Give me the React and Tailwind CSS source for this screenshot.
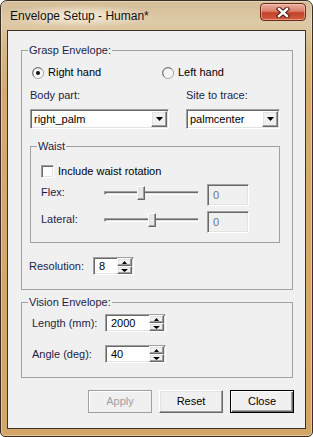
import React from "react";

const sunken =
  "border border-t-[#a0a0a0] border-l-[#a0a0a0] border-r-white border-b-white shadow-[inset_1px_1px_0_#696969,inset_-1px_-1px_0_#e3e3e3]";
const raised =
  "border border-t-white border-l-white border-r-[#696969] border-b-[#696969] shadow-[inset_-1px_-1px_0_#a0a0a0,inset_1px_1px_0_#e3e3e3]";

const Radio = ({ checked }) => (
  <svg width="12" height="12" viewBox="0 0 12 12" className="shrink-0">
    <circle cx="6" cy="6" r="5.5" fill="#fff" stroke="#a0a0a0" />
    <path d="M2.3 9.7 A5 5 0 0 1 9.7 2.3" fill="none" stroke="#6e6e6e" />
    <circle cx="6" cy="6" r="4.2" fill="#f4f4f4" />
    {checked && <circle cx="6" cy="6" r="2" fill="#111" />}
  </svg>
);

const Spin = ({ value, w }) => (
  <div className={`${sunken} ${w} h-[18px] bg-white flex items-center`}>
    <span className="flex-1 pl-[5px] text-[11px] leading-[13px] text-black">{value}</span>
    <div className="flex flex-col w-[15px] h-[16px] mr-[1px]">
      <div className={`${raised} h-[8px] bg-[#f0f0f0] flex items-center justify-center`}>
        <svg width="5" height="3" viewBox="0 0 5 3">
          <polygon points="2.5,0 5,3 0,3" fill="#000" />
        </svg>
      </div>
      <div className={`${raised} h-[8px] bg-[#f0f0f0] flex items-center justify-center`}>
        <svg width="7" height="3" viewBox="0 0 7 3">
          <polygon points="0,0 7,0 3.5,3" fill="#000" />
        </svg>
      </div>
    </div>
  </div>
);

const Select = ({ value, w }) => (
  <div className={`${sunken} ${w} h-[20px] bg-white flex items-center`}>
    <span className="flex-1 pl-[3px] text-[11px] leading-[13px] text-black">{value}</span>
    <div className={`${raised} w-[16px] h-[16px] mr-[1px] bg-[#f0f0f0] flex items-center justify-center`}>
      <svg width="7" height="4" viewBox="0 0 7 4">
        <polygon points="0,0 7,0 3.5,4" fill="#000" />
      </svg>
    </div>
  </div>
);

const Slider = ({ pos }) => (
  <div className="relative w-[95px] h-[18px] flex items-center">
    <div className={`${sunken} w-full h-[4px] bg-[#e3e3e3]`} />
    <div
      className={`${raised} absolute top-[2px] w-[8px] h-[14px] bg-[#e8e8e8]`}
      style={{ left: pos }}
    />
  </div>
);

const SliderRow = ({ label, pos, mt }) => (
  <div className={`flex items-start h-[22px] pl-[10px] ${mt}`}>
    <div className="flex items-center h-[17px] w-[63px] text-[#1e1e46]">{label}</div>
    <div className="h-[17px] flex items-center">
      <Slider pos={pos} />
    </div>
    <div className={`${sunken} ml-[8px] w-[42px] h-[22px] bg-[#f0f0f0] flex items-center pl-[5px] text-[#6a7490]`}>
      0
    </div>
  </div>
);

const App = () => {
  return (
    <div className="w-[313px] h-[437px] bg-white [font-family:'Liberation_Sans',Arial,sans-serif]">
      <div className="w-[313px] h-[437px] flex flex-col rounded-t-[7px] rounded-b-[5px] border border-[#3a2f22] bg-[linear-gradient(180deg,#d4bd98_0px,#dfcaa8_22px,#d9b888_45px,#d5aa70_90px,#d4a568_100%)] shadow-[inset_0_0_0_1px_rgba(255,255,255,0.35)]">
        {/* Title bar */}
        <div className="h-[29px] flex items-start justify-between pl-[9px] pr-[6px]">
          <div className="h-[29px] flex items-center">
            <span className="px-[6px] -ml-[6px] py-[4px] text-[12px] leading-[14px] text-[#111] bg-[radial-gradient(closest-side,rgba(255,250,240,0.8),rgba(255,250,240,0))]">
              Envelope Setup - Human*
            </span>
          </div>
          <div className="mt-[2px] w-[46px] h-[18px] rounded-[4px] border border-[#6b2b1e] bg-[linear-gradient(180deg,#eab0a0_0%,#d9806a_45%,#c3432a_55%,#d25c3c_100%)] shadow-[inset_0_0_0_1px_rgba(255,220,200,0.45)] flex items-center justify-center">
            <svg width="14" height="11" viewBox="0 0 14 11">
              <path d="M3 2 L11 9 M11 2 L3 9" stroke="#4a1c14" strokeWidth="4.4" strokeLinecap="square" />
              <path d="M3 2 L11 9 M11 2 L3 9" stroke="#fff" strokeWidth="2.4" strokeLinecap="square" />
            </svg>
          </div>
        </div>

        {/* Client area */}
        <div className="flex-1 mx-[6px] mb-[7px] border border-[#3b3127] bg-[#f0f0f0] pt-[13px] pl-[13px] pr-[12px] text-[11px] leading-[13px] text-black">
          {/* Grasp Envelope */}
          <fieldset className="border border-[#a0a0a0] pb-[14px]">
            <legend className="ml-[6px] px-[1px] text-[#1e1e46] leading-[13px]">Grasp Envelope:</legend>

            <div className="mt-[9px] h-[13px] pl-[10px] flex items-center">
              <div className="w-[130px] flex items-center gap-[4px]">
                <Radio checked />
                <span>Right hand</span>
              </div>
              <div className="flex items-center gap-[4px]">
                <Radio />
                <span>Left hand</span>
              </div>
            </div>

            <div className="mt-[10px] h-[13px] pl-[8px] flex items-center text-[#1e1e46]">
              <span className="w-[156px]">Body part:</span>
              <span>Site to trace:</span>
            </div>

            <div className="mt-[7px] pl-[8px] flex items-center">
              <Select value="right_palm" w="w-[139px]" />
              <div className="ml-[17px]">
                <Select value="palmcenter" w="w-[94px]" />
              </div>
            </div>

            {/* Waist */}
            <fieldset className="mt-[11px] ml-[8px] w-[250px] border border-[#a0a0a0] pb-[9px]">
              <legend className="ml-[6px] px-[1px] text-[#1e1e46] leading-[13px]">Waist</legend>
              <div className="mt-[12px] h-[13px] pl-[10px] flex items-center gap-[4px]">
                <div className={`${sunken} w-[13px] h-[13px] bg-white`} />
                <span>Include waist rotation</span>
              </div>
              <SliderRow label="Flex:" pos={33} mt="mt-[6px]" />
              <SliderRow label="Lateral:" pos={44} mt="mt-[5px]" />
            </fieldset>

            <div className="mt-[14px] h-[18px] pl-[7px] flex items-center">
              <span className="w-[64px] text-[#1e1e46]">Resolution:</span>
              <Spin value="8" w="w-[41px]" />
            </div>
          </fieldset>

          {/* Vision Envelope */}
          <fieldset className="mt-[6px] border border-[#a0a0a0] pb-[14px]">
            <legend className="ml-[6px] px-[1px] text-[#1e1e46] leading-[13px]">Vision Envelope:</legend>
            <div className="mt-[5px] h-[18px] pl-[10px] flex items-center">
              <span className="w-[73px] text-[#1e1e46]">Length (mm):</span>
              <Spin value="2000" w="w-[61px]" />
            </div>
            <div className="mt-[13px] h-[18px] pl-[10px] flex items-center">
              <span className="w-[73px] text-[#1e1e46]">Angle (deg):</span>
              <Spin value="40" w="w-[61px]" />
            </div>
          </fieldset>

          {/* Buttons */}
          <div className="mt-[12px] flex justify-end gap-[7px] -mr-[1px]">
            <button className="w-[64px] h-[23px] border border-[#a0a0a0] bg-[#f0f0f0] shadow-[inset_1px_1px_0_white] text-[#a0a0a0]">
              Apply
            </button>
            <button className={`${raised} w-[64px] h-[23px] bg-[#f0f0f0] text-black`}>Reset</button>
            <button className="w-[64px] h-[23px] border border-black bg-[#f0f0f0] shadow-[inset_1px_1px_0_white,inset_-1px_-1px_0_#696969,inset_-2px_-2px_0_#a0a0a0] text-black">
              Close
            </button>
          </div>
        </div>
      </div>
    </div>
  );
};

export default App;
